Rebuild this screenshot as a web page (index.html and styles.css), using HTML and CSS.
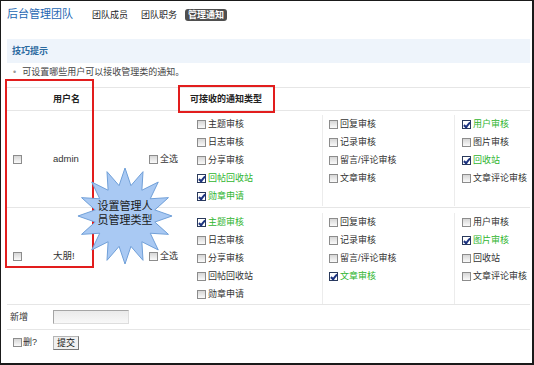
FILE: index.html
```html
<!DOCTYPE html>
<html lang="zh-CN">
<head>
	<meta charset="UTF-8">
	<title>管理通知</title>
	<link rel="stylesheet" href="styles.css">
</head>
<body>

	<div class="page">
		<div class="head">
			<span class="logo">后台管理团队</span>
			<span class="tab">团队成员</span>
			<span class="tab">团队职务</span>
			<span class="tab on">管理通知</span>
		</div>

		<div class="tips">技巧提示</div>
		<div class="note"><i>•</i>可设置哪些用户可以接收管理类的通知。</div>

		<div class="tbl">
			<div class="row hd">
				<div></div>
				<div class="uname">用户名</div>
				<div></div>
				<div class="types-tit">可接收的通知类型</div>
			</div>

			<div class="row item">
				<div class="c-chk"><span class="cb"></span></div>
				<div class="uname">admin</div>
				<div class="c-all"><span class="cb"></span>全选</div>
				<div class="types">
					<ul class="col">
						<li><span class="cb"></span>主题审核</li>
						<li><span class="cb"></span>日志审核</li>
						<li><span class="cb"></span>分享审核</li>
						<li class="on"><span class="cb"></span>回帖回收站</li>
						<li class="on"><span class="cb"></span>勋章申请</li>
					</ul>
					<ul class="col">
						<li><span class="cb"></span>回复审核</li>
						<li><span class="cb"></span>记录审核</li>
						<li><span class="cb"></span>留言/评论审核</li>
						<li><span class="cb"></span>文章审核</li>
					</ul>
					<ul class="col last">
						<li class="on"><span class="cb"></span>用户审核</li>
						<li><span class="cb"></span>图片审核</li>
						<li class="on"><span class="cb"></span>回收站</li>
						<li><span class="cb"></span>文章评论审核</li>
					</ul>
				</div>
			</div>

			<div class="row item second">
				<div class="c-chk"><span class="cb"></span></div>
				<div class="uname">大朋!</div>
				<div class="c-all"><span class="cb"></span>全选</div>
				<div class="types">
					<ul class="col">
						<li class="on"><span class="cb"></span>主题审核</li>
						<li><span class="cb"></span>日志审核</li>
						<li><span class="cb"></span>分享审核</li>
						<li><span class="cb"></span>回帖回收站</li>
						<li><span class="cb"></span>勋章申请</li>
					</ul>
					<ul class="col">
						<li><span class="cb"></span>回复审核</li>
						<li><span class="cb"></span>记录审核</li>
						<li><span class="cb"></span>留言/评论审核</li>
						<li class="on"><span class="cb"></span>文章审核</li>
					</ul>
					<ul class="col last">
						<li><span class="cb"></span>用户审核</li>
						<li class="on"><span class="cb"></span>图片审核</li>
						<li><span class="cb"></span>回收站</li>
						<li><span class="cb"></span>文章评论审核</li>
					</ul>
				</div>
			</div>

			<div class="row foot">
				<div class="lbl">新增</div>
				<div class="field"><span class="ipt"></span></div>
			</div>

			<div class="row foot last">
				<div class="lbl del"><span class="cb"></span>删?</div>
				<div class="field"><span class="btn">提交</span></div>
			</div>
		</div><!-- .tbl -->

		<!-- annotations -->
		<div class="mark mark-user"></div>
		<div class="mark mark-type"></div>
		<div class="burst">
			<svg viewBox="0 0 100 96" preserveAspectRatio="none" width="98" height="96">
				<polygon fill="#a9c9f3" stroke="#6f9fd8" stroke-width="1"
					points="50,0 56.05,17.6 68.37,3.65 67.22,22.22 83.94,14.06 75.78,30.78 94.35,29.63 80.4,41.95 98,48 80.4,54.05 94.35,66.37 75.78,65.22 83.94,81.94 67.22,73.78 68.37,92.35 56.05,78.4 50,96 43.95,78.4 31.63,92.35 32.78,73.78 16.06,81.94 24.22,65.22 5.65,66.37 19.6,54.05 2,48 19.6,41.95 5.65,29.63 24.22,30.78 16.06,14.06 32.78,22.22 31.63,3.65 43.95,17.6"/>
			</svg>
			<p class="burst-txt">设置管理人<br>员管理类型</p>
		</div>
	</div><!-- .page -->

</body>
</html>
```

FILE: styles.css
```css
*{ margin: 0; padding: 0; box-sizing: border-box;}
body{ font: 9px/1.4 "Liberation Sans", "Noto Sans CJK SC", sans-serif; color: #333; background: #fff;}
ul{ list-style: none;}

.page{ position: relative; width: 534px; height: 365px; border: 1px solid #1a1a1a; border-right-width: 2px; border-bottom-width: 2px; overflow: hidden;}

.head{ display: flex; align-items: center; height: 28px; padding-left: 6px;}
.logo{ margin-right: 19px; font-size: 11px; color: #2467b3;}
.tab{ margin-right: 13px; color: #222;}
.tab.on{ margin-left: -5px; padding: 0 3px; height: 12px; line-height: 12px; color: #fff; font-weight: bold; background: #4f4f4f; border-radius: 3px;}

.tips{ margin: 10px 2px 0 6px; padding-left: 5px; height: 24px; line-height: 24px; font-weight: bold; color: #2b6aa0; background: #eef4fb;}
.note{ height: 24px; line-height: 18px; padding-left: 12px; color: #444;}
.note i{ margin-right: 6px; font-style: normal; color: #999;}

.tbl{ margin: 0 2px 0 6px; border-top: 1px solid #e6e6e6;}
.row{ display: grid; grid-template-columns: 38px 95px 38px 1fr; border-bottom: 1px solid #e6e6e6;}
.row.last{ border-bottom: 0;}
.hd{ height: 23px; align-items: center; font-weight: bold; color: #222;}
.uname{ padding-left: 8px; font-size: 9.5px;}
.hd .uname{ font-size: 9px;}
.types-tit{ padding-left: 12px;}

.item{ height: 97px; align-items: center;}
.c-chk{ padding-left: 6px; display: flex; align-items: center;}
.c-all{ padding-left: 9px; display: flex; align-items: center; gap: 2px; white-space: nowrap;}
.types{ display: flex; align-self: start; padding: 4px 0 0 13px;}
.second .types{ padding-top: 5px;}
.col{ width: 132px; padding-left: 6px; padding-bottom: 1px; border-right: 1px solid #ececec;}
.col.last{ padding-left: 7px; border-right: 0;}
.col li{ display: flex; align-items: center; gap: 2px; height: 18px; white-space: nowrap;}
.col li.on{ color: #2fb52f;}

.cb{ position: relative; display: inline-block; flex: none; width: 9px; height: 9px; border: 1px solid #8c8c8c; background: linear-gradient(#d6d6d6, #fafafa);}
.on .cb{ border-color: #2a3a5c; background: #fff;}
.on .cb::after{ content: ""; position: absolute; left: 2px; top: 0; width: 2px; height: 5px; border: solid #1c3380; border-width: 0 2px 2px 0; transform: rotate(40deg);}

.foot{ height: 25px; align-items: center;}
.lbl{ padding-left: 3px;}
.lbl.del{ display: flex; align-items: center; gap: 1px; padding-left: 6px;}
.field{ padding-left: 8px; display: flex; align-items: center;}
.ipt{ display: block; width: 76px; height: 14px; border: 1px solid #a5a5a5; border-right-color: #ddd; border-bottom-color: #ddd; background: linear-gradient(#eaeaea, #f8f8f8);}
.btn{ display: block; width: 26px; height: 14px; line-height: 12px; text-align: center; color: #111; border: 1px solid #b5b5b5; border-right-color: #777; border-bottom-color: #777; background: #f0f0f0;}

.mark{ position: absolute; border: 2px solid #e21d1d;}
.mark-user{ left: 4px; top: 78px; width: 89px; height: 189px;}
.mark-type{ left: 177px; top: 84px; width: 97px; height: 28px;}

.burst{ position: absolute; left: 75px; top: 167px; width: 98px; height: 96px;}
.burst svg{ display: block;}
.burst-txt{ position: absolute; left: 0; right: 0; top: 31px; line-height: 14px; font-size: 11px; text-align: center; color: #1a1a1a;}
```
